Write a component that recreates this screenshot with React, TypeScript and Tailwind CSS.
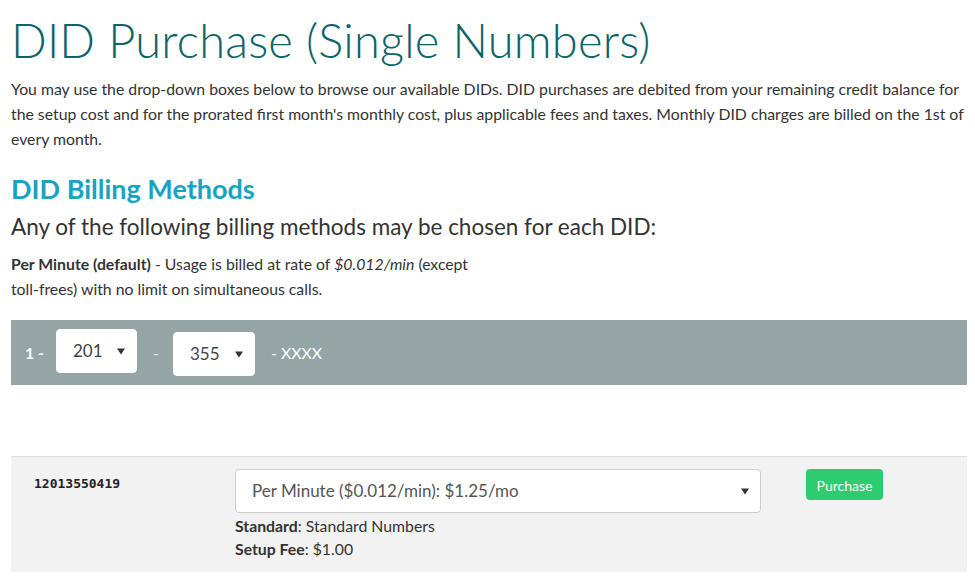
import React from 'react';

const Caret = () => (
  <svg width="8" height="8" viewBox="0 0 8 8" className="shrink-0">
    <path d="M0 1.5 L8 1.5 L4 7.5 Z" fill="#333" />
  </svg>
);

interface FakeSelectProps {
  value: string;
  className?: string;
}

const FakeSelect: React.FC<FakeSelectProps> = ({ value, className = '' }) => (
  <div
    className={`flex items-center justify-between h-[44px] bg-white rounded-[4px] border border-[#cccccc] pl-[16px] pr-[11px] text-[17px] text-[#444] ${className}`}
  >
    <span>{value}</span>
    <Caret />
  </div>
);

const App: React.FC = () => {
  return (
    <div className="min-h-[585px] bg-white font-['Lato','Open_Sans',sans-serif] text-[#333] pl-[11px] pr-[8px] pt-[12px]">
      <h1 className="text-[47px] leading-[56px] font-light text-[#0c6469] tracking-[0.2px]">
        DID Purchase (Single Numbers)
      </h1>

      <p className="mt-[8px] text-[15.8px] leading-[25px] text-[#333] pr-[2px]">
        You may use the drop-down boxes below to browse our available DIDs. DID purchases are debited from your
        remaining credit balance for the setup cost and for the prorated first month's monthly cost, plus applicable
        fees and taxes. Monthly DID charges are billed on the 1st of every month.
      </p>

      <h2 className="mt-[23px] text-[27px] leading-[30px] font-bold text-[#19a3c2]">DID Billing Methods</h2>
      <h3 className="mt-[8px] text-[22.5px] leading-[30px] text-[#333]">
        Any of the following billing methods may be chosen for each DID:
      </h3>

      <p className="mt-[9px] w-[470px] text-[15.8px] leading-[25px]">
        <span className="font-bold">Per Minute (default)</span> - Usage is billed at rate of{' '}
        <em>$0.012/min</em> (except <span className="whitespace-nowrap">toll-frees)</span> with no limit on
        simultaneous calls.
      </p>

      <div className="mt-[19px] h-[65px] bg-[#95a5a6] flex items-center pl-[14px] text-white text-[15.8px]">
        <span className="font-bold w-[31px]">1 -</span>
        <FakeSelect value="201" className="w-[81px] -mt-[4px] border-white" />
        <span className="w-[36px] pl-[16px] opacity-80">-</span>
        <FakeSelect value="355" className="w-[82px] mt-[2px] border-white" />
        <span className="ml-[16px]">- XXXX</span>
      </div>

      <div className="mt-[71px] border-t border-[#dddddd] bg-[#f2f2f2] h-[116px] flex pt-[12px]">
        <div className="w-[224px] pl-[23px] pt-[5px] font-['DejaVu_Sans_Mono','Liberation_Mono',monospace] font-bold text-[13px] leading-[20px] text-[#222]">
          12013550419
        </div>
        <div className="w-[526px]">
          <FakeSelect value="Per Minute ($0.012/min): $1.25/mo" className="w-[526px] text-[#555]" />
          <div className="mt-[1px] text-[15.8px] leading-[23px]">
            <div>
              <span className="font-bold">Standard</span>: Standard Numbers
            </div>
            <div>
              <span className="font-bold">Setup Fee</span>: $1.00
            </div>
          </div>
        </div>
        <div className="ml-[45px]">
          <button className="h-[31px] w-[77px] rounded-[4px] bg-[#2ecc71] text-white text-[14px] pt-[2px]">
            Purchase
          </button>
        </div>
      </div>
    </div>
  );
};

export default App;
